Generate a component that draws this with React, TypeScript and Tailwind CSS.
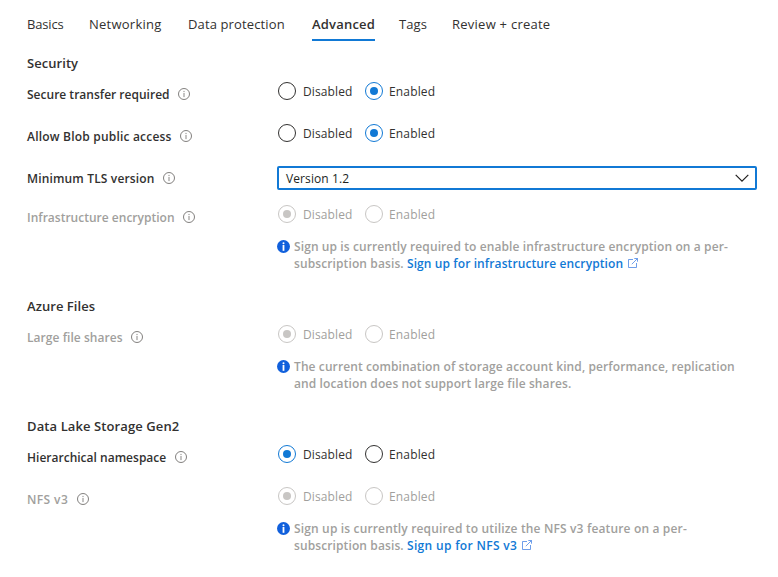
import type { ReactNode } from "react";

function InfoOutline() {
  return (
    <svg className="-mt-[2px] h-3 w-3 shrink-0" viewBox="0 0 12 12" fill="none">
      <circle cx="6" cy="6" r="5.5" stroke="#6b6967" strokeWidth="0.85" />
      <rect x="5.5" y="2.9" width="1" height="1.1" fill="#8a8886" />
      <rect x="5.5" y="4.9" width="1" height="4.2" fill="#8a8886" />
    </svg>
  );
}

function InfoSolid() {
  return (
    <svg className="mt-[2px] h-[13px] w-[13px] shrink-0" viewBox="0 0 13 13">
      <circle cx="6.5" cy="6.5" r="6.5" fill="#1160dc" />
      <circle cx="6.5" cy="3.2" r="1" fill="#fff" />
      <rect x="5.6" y="5" width="1.8" height="5.8" fill="#fff" />
    </svg>
  );
}

function External() {
  return (
    <svg className="ml-[5px] inline-block h-[10px] w-[10px] align-[0px]" viewBox="0 0 10 10" fill="none" stroke="#4a87e4" strokeWidth="0.8">
      <path d="M5 1.5H0.5V9.5H8.5V5" />
      <path d="M6.3 0.5H9.5V3.7M9.5 0.5L3.8 6.2" />
    </svg>
  );
}

function Radio({ checked, disabled }: { checked?: boolean; disabled?: boolean }) {
  const ring = disabled ? "border-[#c8c6c4]" : checked ? "border-[#1179d5]" : "border-[#323130]";
  return (
    <span className={`flex h-[18px] w-[18px] shrink-0 items-center justify-center rounded-full border ${ring}`}>
      {checked && <span className={`h-2 w-2 rounded-full ${disabled ? "bg-[#c8c6c4]" : "bg-[#1179d5]"}`} />}
    </span>
  );
}

function RadioPair({ value, disabled }: { value: "Disabled" | "Enabled"; disabled?: boolean }) {
  return (
    <div className={`ml-px flex h-[18px] items-center ${disabled ? "text-[#a19f9d]" : "text-[#323130]"}`}>
      <div className="flex w-[87px] items-center gap-[7px]">
        <Radio checked={value === "Disabled"} disabled={disabled} />
        <span className="pt-[2px] leading-4 tracking-[0.12px]">Disabled</span>
      </div>
      <div className="flex items-center gap-[6px]">
        <Radio checked={value === "Enabled"} disabled={disabled} />
        <span className="pt-[2px] leading-4 tracking-[0.15px]">Enabled</span>
      </div>
    </div>
  );
}

function Row({ label, track, height, muted, children }: { label: string; track: string; height: string; muted?: boolean; children: ReactNode }) {
  return (
    <div className={`flex ${height}`}>
      <div className="flex h-5 w-[250px] shrink-0 items-center gap-[8.4px] pt-[22px]">
        <span className={`font-semibold leading-5 ${track} ${muted ? "text-[#a19f9d]" : "text-[#323130]"}`}>{label}</span>
        <InfoOutline />
      </div>
      <div className="w-[480px] pt-[9px]">{children}</div>
    </div>
  );
}

function Note({ children }: { children: ReactNode }) {
  return (
    <div className="mt-[15px] flex gap-1 font-semibold leading-[17px] text-[#a19f9d]">
      <InfoSolid />
      <div>{children}</div>
    </div>
  );
}

function Heading({ track, children }: { track: string; children: ReactNode }) {
  return <h2 className={`h-5 text-[13px] font-semibold leading-5 text-[#323130] ${track}`}>{children}</h2>;
}

const tabs = [
  { name: "Basics", box: "w-[62px]", track: "-tracking-[0.15px]" },
  { name: "Networking", box: "w-[99px]", track: "tracking-[0.25px]" },
  { name: "Data protection", box: "w-[124px]", track: "tracking-[0.13px]" },
  { name: "Advanced", box: "w-[87px]", track: "tracking-[0.2px]", active: true },
  { name: "Tags", box: "w-[53px]", track: "tracking-[0.1px]" },
  { name: "Review + create", box: "w-[110px]", track: "tracking-[0.25px]" },
];

export default function App() {
  return (
    <main className="h-[577px] w-[778px] overflow-hidden whitespace-nowrap bg-white pl-[27px] font-['Open_Sans','Noto_Sans',sans-serif] text-[12px] text-[#323130]">
      <nav className="flex h-[41px] text-[13px]">
        {tabs.map((t) => (
          <div key={t.name} className={t.box}>
            <div className={`h-[41px] w-fit pt-[14px] leading-5 ${t.track} ${t.active ? "border-b-2 border-[#1179d5] font-semibold" : ""}`}>{t.name}</div>
          </div>
        ))}
      </nav>

      <section className="mt-3">
        <Heading track="tracking-[0.05px]">Security</Heading>
        <Row label="Secure transfer required" track="tracking-[0.01px]" height="h-[42px]">
          <RadioPair value="Enabled" />
        </Row>
        <Row label="Allow Blob public access" track="tracking-[0.2px]" height="h-[42px]">
          <RadioPair value="Enabled" />
        </Row>
        <Row label="Minimum TLS version" track="tracking-[0.15px]" height="h-[39px]">
          <div className="flex h-6 items-center justify-between rounded-[2px] border-2 border-[#1179d5] pl-[7px] pr-[6px] text-[#201f1e]">
            <span className="pt-[2px] leading-4 tracking-[0.1px]">Version 1.2</span>
            <svg className="h-2 w-[14px]" viewBox="0 0 14 8" fill="none" stroke="#201f1e" strokeWidth="1.2">
              <path d="M0.7 0.9L7 7.1L13.3 0.9" />
            </svg>
          </div>
        </Row>
        <Row label="Infrastructure encryption" track="tracking-[0.01px]" height="h-[100px]" muted>
          <RadioPair value="Disabled" disabled />
          <Note>
            <div className="tracking-[0.1px]">Sign up is currently required to enable infrastructure encryption on a per-</div>
            <div>
              <span className="tracking-[0.11px]">subscription basis. </span>
              <a className="text-[#1179d5] tracking-[0.1px]">Sign up for infrastructure encryption</a>
              <External />
            </div>
          </Note>
        </Row>
      </section>

      <section>
        <Heading track="tracking-[0.05px]">Azure Files</Heading>
        <Row label="Large file shares" track="tracking-[0.05px]" height="h-[100px]" muted>
          <RadioPair value="Disabled" disabled />
          <Note>
            <div className="tracking-[0.1px]">The current combination of storage account kind, performance, replication</div>
            <div className="tracking-[0.11px]">and location does not support large file shares.</div>
          </Note>
        </Row>
      </section>

      <section>
        <Heading track="tracking-[0.1px]">Data Lake Storage Gen2</Heading>
        <Row label="Hierarchical namespace" track="tracking-[0.01px]" height="h-[42px]">
          <RadioPair value="Disabled" />
        </Row>
        <Row label="NFS v3" track="tracking-[0.4px]" height="h-[90px]" muted>
          <RadioPair value="Disabled" disabled />
          <Note>
            <div className="tracking-[0.155px]">Sign up is currently required to utilize the NFS v3 feature on a per-</div>
            <div>
              <span className="tracking-[0.11px]">subscription basis. </span>
              <a className="text-[#1179d5] tracking-[0.33px]">Sign up for NFS v3</a>
              <External />
            </div>
          </Note>
        </Row>
      </section>
    </main>
  );
}
